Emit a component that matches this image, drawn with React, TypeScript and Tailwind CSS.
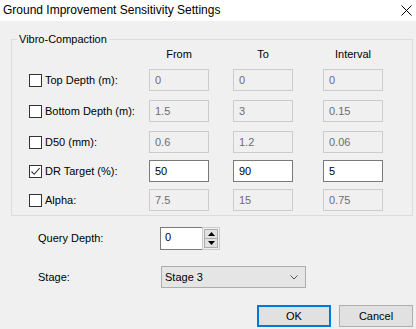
import React from "react";

interface Row {
  label: string;
  from: string;
  to: string;
  interval: string;
  checked?: boolean;
  gap: string;
}

const ROWS: Row[] = [
  { label: "Top Depth (m):", from: "0", to: "0", interval: "0", gap: "mt-[7px]" },
  { label: "Bottom Depth (m):", from: "1.5", to: "3", interval: "0.15", gap: "mt-[9px]" },
  { label: "D50 (mm):", from: "0.6", to: "1.2", interval: "0.06", gap: "mt-[9px]" },
  { label: "DR Target (%):", from: "50", to: "90", interval: "5", checked: true, gap: "mt-[7px]" },
  { label: "Alpha:", from: "7.5", to: "15", interval: "0.75", gap: "mt-[7px]" },
];

const CheckBox = ({ checked }: { checked?: boolean }) => (
  <div className="w-[13px] h-[13px] border border-[#333333] bg-white flex items-center justify-center shrink-0">
    {checked && (
      <svg width="11" height="11" viewBox="0 0 11 11">
        <path d="M1.5 5.5 L4.2 8.3 L9.6 2.2" fill="none" stroke="#333333" strokeWidth="1.1" />
      </svg>
    )}
  </div>
);

const Field = ({ value, enabled, className = "" }: { value: string; enabled?: boolean; className?: string }) => (
  <div
    className={`w-[60px] h-[22px] flex items-center pl-[5px] border ${
      enabled ? "bg-white border-[#7a7a7a] text-black" : "bg-[#f0f0f0] border-[#cccccc] text-[#6d6d6d]"
    } ${className}`}
  >
    {value}
  </div>
);

export default function App() {
  return (
    <div
      className="w-[416px] h-[329px] bg-[#f0f0f0] text-[11px] leading-[15px] text-black overflow-hidden"
      style={{ fontFamily: '"Liberation Sans", Arial, sans-serif' }}
    >
      {/* Title bar */}
      <div className="h-[21px] bg-white flex items-center justify-between pl-[3px] pr-[3px] text-[12px]">
        <span>Ground Improvement Sensitivity Settings</span>
        <svg width="11" height="11" viewBox="0 0 11 11" className="mr-[1px]">
          <path d="M0.5 0.5 L10.5 10.5 M10.5 0.5 L0.5 10.5" stroke="#000" strokeWidth="1" />
        </svg>
      </div>

      <div className="pl-[11px] pr-[3px]">
        <fieldset className="mt-[11px] w-[402px] border border-[#dcdcdc] pb-[4px]">
          <legend className="ml-[5px] px-[2px]">Vibro-Compaction</legend>

          <div className="flex h-[15px]">
            <div className="w-[137px]" />
            <div className="w-[60px] text-center">From</div>
            <div className="w-[60px] ml-[24px] text-center">To</div>
            <div className="w-[60px] ml-[30px] text-center">Interval</div>
          </div>

          {ROWS.map((row) => (
            <div key={row.label} className={`flex items-center h-[22px] ${row.gap}`}>
              <div className="w-[137px] flex items-center pl-[17px]">
                <CheckBox checked={row.checked} />
                <span className="ml-[3px]">{row.label}</span>
              </div>
              <Field value={row.from} enabled={row.checked} />
              <Field value={row.to} enabled={row.checked} className="ml-[24px]" />
              <Field value={row.interval} enabled={row.checked} className="ml-[30px]" />
            </div>
          ))}
        </fieldset>

        {/* Query depth */}
        <div className="flex items-center mt-[11px] pl-[27px]">
          <span className="w-[122px]">Query Depth:</span>
          <div className="flex h-[23px]">
            <div className="w-[42px] h-full bg-white border border-r-0 border-[#7a7a7a] flex items-center pl-[4px] pb-[3px]">
              0
            </div>
            <div className="w-[18px] h-full flex flex-col border border-[#cccccc] bg-[#f0f0f0] p-px">
              <div className="flex-1 border border-[#adadad] bg-[#e1e1e1] flex items-center justify-center">
                <svg width="7" height="4" viewBox="0 0 7 4">
                  <path d="M0 4 L3.5 0 L7 4 Z" fill="#000" />
                </svg>
              </div>
              <div className="flex-1 border border-[#adadad] border-t-0 bg-[#e1e1e1] flex items-center justify-center">
                <svg width="7" height="4" viewBox="0 0 7 4">
                  <path d="M0 0 L7 0 L3.5 4 Z" fill="#000" />
                </svg>
              </div>
            </div>
          </div>
        </div>

        {/* Stage */}
        <div className="flex items-center mt-[16px] pl-[27px]">
          <span className="w-[123px]">Stage:</span>
          <div className="w-[145px] h-[22px] bg-[#e5e5e5] border border-[#adadad] flex items-center justify-between pl-[3px] pr-[7px]">
            <span>Stage 3</span>
            <svg width="8" height="5" viewBox="0 0 8 5">
              <path d="M0.5 0.5 L4 4 L7.5 0.5" fill="none" stroke="#555" strokeWidth="1" />
            </svg>
          </div>
        </div>

        {/* Buttons */}
        <div className="flex justify-end gap-[8px] mt-[17px]">
          <button className="w-[74px] h-[22px] bg-[#e1e1e1] border-2 border-[#0078d7] flex items-center justify-center">
            OK
          </button>
          <button className="w-[74px] h-[22px] bg-[#e1e1e1] border border-[#adadad] flex items-center justify-center">
            Cancel
          </button>
        </div>
      </div>
    </div>
  );
}
